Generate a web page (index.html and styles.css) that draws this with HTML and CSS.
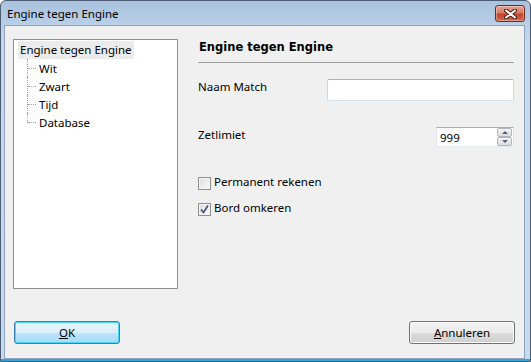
FILE: index.html
```html
<!DOCTYPE html>
<html lang="nl">
<head>
    <meta charset="UTF-8">
    <meta name="viewport" content="width=device-width, initial-scale=1.0">
    <title>Engine tegen Engine</title>
    <link rel="stylesheet" href="styles.css">
</head>
<body>
    <div class="window">
        <div class="titlebar">
            <span class="title">Engine tegen Engine</span>
            <button class="close" title="Sluiten">
                <svg width="13" height="10" viewBox="0 0 13 10">
                    <path d="M2 1.5 L11 8.5 M11 1.5 L2 8.5" stroke="#4a1c14" stroke-width="4" stroke-linecap="round"/>
                    <path d="M2 1.5 L11 8.5 M11 1.5 L2 8.5" stroke="#ffffff" stroke-width="2" stroke-linecap="round"/>
                </svg>
            </button>
        </div>

        <div class="client">
            <div class="main">
                <div class="tree">
                    <div class="tree-root"><span class="selected">Engine tegen Engine</span></div>
                    <ul class="tree-children">
                        <li><span class="tree-line"></span>Wit</li>
                        <li><span class="tree-line"></span>Zwart</li>
                        <li><span class="tree-line"></span>Tijd</li>
                        <li class="last"><span class="tree-line"></span>Database</li>
                    </ul>
                </div>

                <div class="panel">
                    <h2>Engine tegen Engine</h2>

                    <div class="field name-field">
                        <label for="match-name">Naam Match</label>
                        <input type="text" id="match-name" class="text-input">
                    </div>

                    <div class="field limit-field">
                        <label>Zetlimiet</label>
                        <div class="spin">
                            <span class="spin-value">999</span>
                            <div class="spin-buttons">
                                <span class="spin-btn"><span class="arrow-up"></span></span>
                                <span class="spin-btn"><span class="arrow-down"></span></span>
                            </div>
                        </div>
                    </div>

                    <div class="check first">
                        <span class="box"></span>
                        <span>Permanent rekenen</span>
                    </div>
                    <div class="check">
                        <span class="box">
                            <svg width="9" height="9" viewBox="0 0 9 9">
                                <path d="M1 4.5 L3.5 7.5 L8 0.5" fill="none" stroke="#3b4f7a" stroke-width="1.6"/>
                            </svg>
                        </span>
                        <span>Bord omkeren</span>
                    </div>
                </div>
            </div>

            <div class="buttons">
                <button class="btn default"><u>O</u>K</button>
                <button class="btn"><u>A</u>nnuleren</button>
            </div>
        </div>
    </div>
</body>
</html>
```

FILE: styles.css
```css
* {
    box-sizing: border-box;
}
body {
    margin: 0;
    font-family: "Noto Sans", Arial, sans-serif;
    font-size: 11.5px;
    line-height: 15px;
    color: #000;
    background: #fff;
}
.window {
    width: 531px;
    height: 362px;
    display: flex;
    flex-direction: column;
    border: 1px solid #4b5c73;
    border-radius: 6px 6px 0 0;
    background: linear-gradient(#a9c2de, #c4d8ee 40px, #c7dbef);
    box-shadow: inset 0 -2px #3aa3d6;
}
.titlebar {
    height: 24px;
    display: flex;
    justify-content: space-between;
    align-items: flex-start;
    flex-shrink: 0;
}
.title {
    padding: 5px 0 0 6px;
    font-size: 11.5px;
}
.close {
    width: 30px;
    height: 17px;
    margin: 4px 5px 0 0;
    padding: 0;
    border: 1px solid #6d2a1f;
    border-radius: 3px;
    background: linear-gradient(#e7a493, #d67a63 45%, #c2462c 55%, #d0694f);
    box-shadow: inset 0 0 0 1px rgba(255, 255, 255, 0.35);
    display: flex;
    align-items: center;
    justify-content: center;
}
.client {
    flex: 1;
    margin: 0 5px 2px 3px;
    border: 1px solid #8ea3bd;
    background: #f0f0f0;
    padding: 13px 9px 0 8px;
    display: flex;
    flex-direction: column;
}
.main {
    display: flex;
    gap: 20px;
}
.tree {
    width: 165px;
    height: 250px;
    border: 1px solid #8e8f8f;
    background: #fff;
    padding: 1px 0 0 4px;
}
.tree-root .selected {
    display: inline-block;
    height: 18px;
    line-height: 18px;
    padding: 0 2px;
    background: #ebebeb;
}
.tree-children {
    list-style: none;
    margin: 0;
    padding: 0 0 0 9px;
}
.tree-children li {
    height: 18px;
    display: flex;
    align-items: center;
}
.tree-line {
    width: 10px;
    height: 18px;
    margin-right: 2px;
    border-left: 1px dotted #a0a0a0;
    display: flex;
    align-items: center;
}
.tree-line::after {
    content: "";
    width: 8px;
    border-top: 1px dotted #a0a0a0;
}
.tree-children li.last .tree-line {
    height: 10px;
    align-self: flex-start;
    align-items: flex-end;
}
.panel {
    width: 316px;
}
.panel h2 {
    margin: 0;
    padding: 1px 0 8px 1px;
    font-family: "DejaVu Sans", Verdana, sans-serif;
    font-size: 11.5px;
    line-height: 14px;
    font-weight: bold;
    border-bottom: 1px solid #a0a0a0;
}
.field {
    display: flex;
    justify-content: space-between;
    align-items: flex-start;
}
.name-field {
    margin-top: 16px;
}
.limit-field {
    margin-top: 26px;
}
.text-input {
    width: 187px;
    height: 22px;
    border: 1px solid;
    border-color: #9fb3c9 #c8d9ea #d3e1ee #c8d9ea;
    border-radius: 2px;
    background: #fff;
    outline: none;
}
.spin {
    width: 78px;
    height: 20px;
    border: 1px solid;
    border-color: #abadb3 #dbdfe6 #e3e9ef #e2e3ea;
    background: #fff;
    display: flex;
    justify-content: space-between;
    align-items: center;
    padding: 0 1px 0 3px;
}
.spin-buttons {
    display: flex;
    flex-direction: column;
    gap: 0;
}
.spin-btn {
    width: 15px;
    height: 9px;
    border: 1px solid #b4b7bd;
    border-radius: 2px;
    background: linear-gradient(#f5f5f5, #dcdcdc);
    display: flex;
    align-items: center;
    justify-content: center;
}
.arrow-up {
    border-left: 3px solid transparent;
    border-right: 3px solid transparent;
    border-bottom: 3px solid #4c5f86;
}
.arrow-down {
    border-left: 3px solid transparent;
    border-right: 3px solid transparent;
    border-top: 3px solid #4c5f86;
}
.check {
    display: flex;
    align-items: flex-start;
    gap: 3px;
    margin-top: 10px;
}
.check.first {
    margin-top: 27px;
}
.box {
    width: 13px;
    height: 13px;
    margin-top: 3px;
    border: 1px solid #8e8f8f;
    background: linear-gradient(135deg, #dcdcdc, #fbfbfb);
    box-shadow: inset 0 0 0 1px #f4f4f4;
    display: flex;
    align-items: center;
    justify-content: center;
}
.buttons {
    margin-top: 32px;
    display: flex;
    justify-content: space-between;
    padding-left: 1px;
}
.btn {
    width: 106px;
    height: 23px;
    padding: 0;
    font-family: "Noto Sans", Arial, sans-serif;
    font-size: 11.5px;
    color: #000;
    border: 1px solid #707070;
    border-radius: 3px;
    background: linear-gradient(#f2f2f2, #ebebeb 50%, #dddddd 51%, #cfcfcf);
    box-shadow: inset 0 0 0 1px #fcfcfc;
}
.btn.default {
    border-color: #3c7fb1;
    background: linear-gradient(#eaf6fd, #d9f0fc 50%, #bee6fd 51%, #a7d9f5);
    box-shadow: inset 0 0 0 1px #48d6fb;
}
```
